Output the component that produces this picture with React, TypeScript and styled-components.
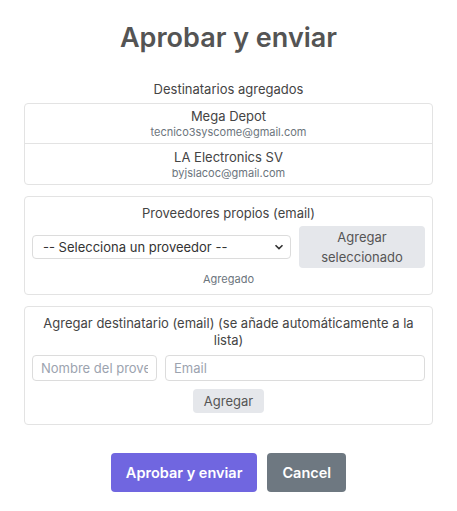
import React from "react";
import styled, { createGlobalStyle } from "styled-components";

const Global = createGlobalStyle`
  html, body { margin: 0; padding: 0; background: #fff; }
  body { font-family: Inter, "Noto Sans", sans-serif; color: #545454; }
  * { box-sizing: border-box; }
`;

const Modal = styled.div`
  width: 457px;
  height: 511px;
  padding: 18px 24px 0;
  display: flex;
  flex-direction: column;
`;

const Title = styled.h2`
  margin: 0;
  text-align: center;
  font-size: 27px;
  line-height: 40px;
  font-weight: 600;
  color: #545454;
`;

const Section = styled.div`
  margin-top: 22px;
  display: flex;
  flex-direction: column;
`;

const Label = styled.div`
  text-align: center;
  font-size: 13px;
  line-height: 18px;
  color: #444;
`;

const List = styled.div`
  margin-top: 5px;
  border: 1px solid #e3e3e3;
  border-radius: 4px;
`;

const Item = styled.div<{ $last?: boolean }>`
  height: 40px;
  display: flex;
  flex-direction: column;
  align-items: center;
  justify-content: center;
  border-bottom: ${(p) => (p.$last ? "none" : "1px solid #e3e3e3")};
`;

const Name = styled.div`
  font-size: 13px;
  line-height: 17px;
  color: #444;
`;

const Email = styled.div`
  font-size: 11px;
  line-height: 14px;
  color: #6c757d;
`;

const Card = styled.div<{ $bottom: number }>`
  margin-top: 11px;
  border: 1px solid #e3e3e3;
  border-radius: 4px;
  padding: 8px 7px ${(p) => p.$bottom}px;
  display: flex;
  flex-direction: column;
  align-items: stretch;
`;

const CardTitle = styled.div`
  text-align: center;
  font-size: 13px;
  line-height: 17px;
  color: #444;
`;

const Row = styled.div<{ $cols: string; $top: number }>`
  margin-top: ${(p) => p.$top}px;
  display: grid;
  grid-template-columns: ${(p) => p.$cols};
  gap: 8px;
  align-items: center;
`;

const Select = styled.select`
  height: 24px;
  border: 1px solid #dcdcdc;
  border-radius: 4px;
  background: #fff;
  font-family: Inter, sans-serif;
  font-size: 13px;
  color: #333;
  padding: 0 10px;
  appearance: none;
  background-image: url("data:image/svg+xml;utf8,<svg xmlns='http://www.w3.org/2000/svg' width='10' height='10' viewBox='0 0 10 10'><path d='M1.5 3.2 L5 6.6 L8.5 3.2' fill='none' stroke='%23333' stroke-width='1.6'/></svg>");
  background-repeat: no-repeat;
  background-position: right 6px center;
`;

const GrayButton = styled.button`
  border: none;
  border-radius: 4px;
  background: #e5e7eb;
  color: #555;
  font-family: Inter, sans-serif;
  font-size: 13px;
  line-height: 20px;
  padding: 1px 8px;
`;

const Note = styled.div`
  margin-top: 4px;
  text-align: center;
  font-size: 11px;
  line-height: 14px;
  color: #6c757d;
`;

const Input = styled.input`
  height: 26px;
  min-width: 0;
  border: 1px solid #dcdcdc;
  border-radius: 4px;
  padding: 0 8px;
  font-family: Inter, sans-serif;
  font-size: 13px;
  color: #333;
  &::placeholder { color: #9ca3af; }
`;

const Center = styled.div`
  margin-top: 8px;
  display: flex;
  justify-content: center;
`;

const SmallButton = styled(GrayButton)`
  height: 24px;
  padding: 0 11px;
`;

const Actions = styled.div`
  margin-top: 28px;
  display: flex;
  justify-content: center;
  gap: 10px;
`;

const ActionButton = styled.button<{ $bg: string }>`
  height: 39px;
  border: none;
  border-radius: 4px;
  background: ${(p) => p.$bg};
  color: #fff;
  font-family: Inter, sans-serif;
  font-size: 14.5px;
  font-weight: 600;
  padding: 0 15px;
`;

export default function App() {
  return (
    <>
      <Global />
      <Modal>
        <Title>Aprobar y enviar</Title>
        <Section>
          <Label>Destinatarios agregados</Label>
          <List>
            <Item>
              <Name>Mega Depot</Name>
              <Email>tecnico3syscome@gmail.com</Email>
            </Item>
            <Item $last>
              <Name>LA Electronics SV</Name>
              <Email>byjslacoc@gmail.com</Email>
            </Item>
          </List>
        </Section>
        <Card $bottom={8}>
          <CardTitle>Proveedores propios (email)</CardTitle>
          <Row $cols="1fr 126px" $top={4}>
            <Select defaultValue="">
              <option value="">-- Selecciona un proveedor --</option>
            </Select>
            <GrayButton>Agregar seleccionado</GrayButton>
          </Row>
          <Note>Agregado</Note>
        </Card>
        <Card $bottom={11}>
          <CardTitle>Agregar destinatario (email) (se añade automáticamente a la lista)</CardTitle>
          <Row $cols="125px 1fr" $top={6}>
            <Input placeholder="Nombre del proveedor" />
            <Input placeholder="Email" />
          </Row>
          <Center>
            <SmallButton>Agregar</SmallButton>
          </Center>
        </Card>
        <Actions>
          <ActionButton $bg="#7066e0">Aprobar y enviar</ActionButton>
          <ActionButton $bg="#6e7881">Cancel</ActionButton>
        </Actions>
      </Modal>
    </>
  );
}
